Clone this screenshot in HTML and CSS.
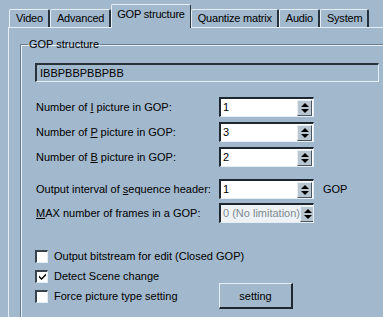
FILE: index.html
```html
<!DOCTYPE html>
<html lang="en">

<head>
    <meta charset="UTF-8">
    <title>GOP structure</title>
    <link rel="stylesheet" href="styles.css">
</head>

<body>
    <div class="tabs">
        <span class="tab">Video</span>
        <span class="tab">Advanced</span>
        <span class="tab active">GOP structure</span>
        <span class="tab">Quantize matrix</span>
        <span class="tab">Audio</span>
        <span class="tab">System</span>
    </div>
    <div class="panel">
        <fieldset class="group">
            <legend>GOP structure</legend>
            <div class="pattern">IBBPBBPBBPBB</div>

            <div class="rows">
                <span>Number of <u>I</u> picture in GOP:</span>
                <span class="spin"><span class="value">1</span><span class="arrows"><i class="up"></i><i class="down"></i></span></span>
                <span></span>

                <span>Number of <u>P</u> picture in GOP:</span>
                <span class="spin"><span class="value">3</span><span class="arrows"><i class="up"></i><i class="down"></i></span></span>
                <span></span>

                <span>Number of <u>B</u> picture in GOP:</span>
                <span class="spin"><span class="value">2</span><span class="arrows"><i class="up"></i><i class="down"></i></span></span>
                <span></span>
            </div>

            <div class="rows second">
                <span>Output interval of <u>s</u>equence header:</span>
                <span class="spin"><span class="value">1</span><span class="arrows"><i class="up"></i><i class="down"></i></span></span>
                <span class="unit">GOP</span>

                <span><u>M</u>AX number of frames in a GOP:</span>
                <span class="spin disabled"><span class="value">0 (No limitation)</span><span class="arrows"><i class="up"></i><i class="down"></i></span></span>
                <span></span>
            </div>

            <div class="checks">
                <div class="check-row">
                    <span class="box"></span>Output bitstream for edit (Closed GOP)
                </div>
                <div class="check-row">
                    <span class="box">
                        <svg width="7" height="7" viewBox="0 0 7 7"><path d="M0 2.5 L2.5 5 L7 0.5 V2.5 L2.5 7 L0 4.5 Z" fill="#000"/></svg>
                    </span>Detect Scene change
                </div>
                <div class="check-row last">
                    <span class="check-label"><span class="box"></span>Force picture type setting</span>
                    <button class="btn">setting</button>
                </div>
            </div>
        </fieldset>
    </div>
</body>

</html>
```

FILE: styles.css
```css
body {
    font-family: "Liberation Sans", Arial, sans-serif;
    font-size: 11px;
    background-color: #a2b8cc;
    color: #000;
    margin: 0;
    padding: 0;
    width: 383px;
    height: 317px;
    overflow: hidden;
}

u {
    text-decoration-thickness: 1px;
    text-underline-offset: 1px;
}

.tabs {
    display: flex;
    align-items: flex-end;
    height: 27px;
    padding-left: 9px;
    white-space: nowrap;
}

.tab {
    flex: none;
    height: 18px;
    line-height: 17px;
    padding: 0 5px 0 6px;
    letter-spacing: -0.2px;
    border-top: 1px solid #e6eef5;
    border-left: 1px solid #e6eef5;
    border-right: 2px solid #26323c;
    border-radius: 2px 2px 0 0;
    box-sizing: border-box;
}

.tab.active {
    position: relative;
    z-index: 1;
    height: 24px;
    line-height: 19px;
    margin-bottom: -1px;
    padding: 0 5px;
    background-color: #a2b8cc;
    border-right: 1px solid #26323c;
}

.panel {
    margin-left: 8px;
    border-top: 1px solid #e6eef5;
    border-left: 1px solid #e6eef5;
    height: 290px;
}

.group {
    margin: 9px -40px 0 11px;
    padding: 0 0 0 14px;
    border: 1px solid #6b7f90;
    box-shadow: inset 1px 1px 0 #e6eef5, 1px 1px 0 #e6eef5;
    height: 290px;
}

.group legend {
    margin-left: -7px;
    padding: 0 1px;
    line-height: 14px;
}

.pattern {
    width: 344px;
    height: 19px;
    margin-top: 12px;
    padding-left: 3px;
    line-height: 17px;
    box-sizing: border-box;
    border-top: 2px solid #27323b;
    border-left: 2px solid #27323b;
    border-bottom: 1px solid #e6eef5;
    border-right: 1px solid #e6eef5;
}

.rows {
    display: grid;
    grid-template-columns: 183px 95px auto;
    grid-auto-rows: 20px;
    row-gap: 5px;
    align-items: center;
    margin-top: 15px;
    padding-left: 1px;
    white-space: nowrap;
}

.rows.second {
    margin-top: 12px;
    row-gap: 4px;
}

.unit {
    padding-left: 9px;
}

.spin {
    display: flex;
    align-items: center;
    height: 20px;
    box-sizing: border-box;
    background-color: #fff;
    border-top: 2px solid #1e272f;
    border-left: 2px solid #1e272f;
    border-bottom: 1px solid #e6eef5;
    border-right: 1px solid #e6eef5;
    overflow: hidden;
}

.spin .value {
    flex: 1;
    padding-left: 2px;
    line-height: 17px;
}

.spin.disabled {
    background-color: #eef2f5;
    color: #7e8a94;
}

.arrows {
    display: flex;
    flex: none;
    flex-direction: column;
    justify-content: center;
    align-items: center;
    gap: 2px;
    width: 15px;
    height: 16px;
    margin-right: 1px;
    box-sizing: border-box;
    background-color: #b9c6d0;
    border-top: 1px solid #e6eef5;
    border-left: 1px solid #e6eef5;
    border-right: 1px solid #4a5661;
    border-bottom: 1px solid #4a5661;
}

.arrows i {
    width: 0;
    height: 0;
    border-left: 4px solid transparent;
    border-right: 4px solid transparent;
}

.arrows .up {
    border-bottom: 4px solid #000;
}

.arrows .down {
    border-top: 4px solid #000;
}

.checks {
    display: flex;
    flex-direction: column;
    margin-top: 23px;
    white-space: nowrap;
}

.check-row {
    display: flex;
    align-items: center;
    height: 20px;
}

.check-row.last {
    height: 26px;
    margin-top: -3px;
}

.check-label {
    display: flex;
    align-items: center;
    width: 184px;
}

.box {
    display: flex;
    align-items: center;
    justify-content: center;
    flex: none;
    width: 13px;
    height: 13px;
    margin-right: 6px;
    box-sizing: border-box;
    background-color: #fff;
    border-top: 2px solid #38444e;
    border-left: 2px solid #38444e;
    border-bottom: 1px solid #e6eef5;
    border-right: 1px solid #e6eef5;
}

.btn {
    width: 74px;
    height: 26px;
    padding: 0;
    font-family: inherit;
    font-size: 11px;
    color: #000;
    background-color: #a2b8cc;
    border-top: 1px solid #e6eef5;
    border-left: 1px solid #e6eef5;
    border-right: 2px solid #1e272f;
    border-bottom: 2px solid #1e272f;
}
```
